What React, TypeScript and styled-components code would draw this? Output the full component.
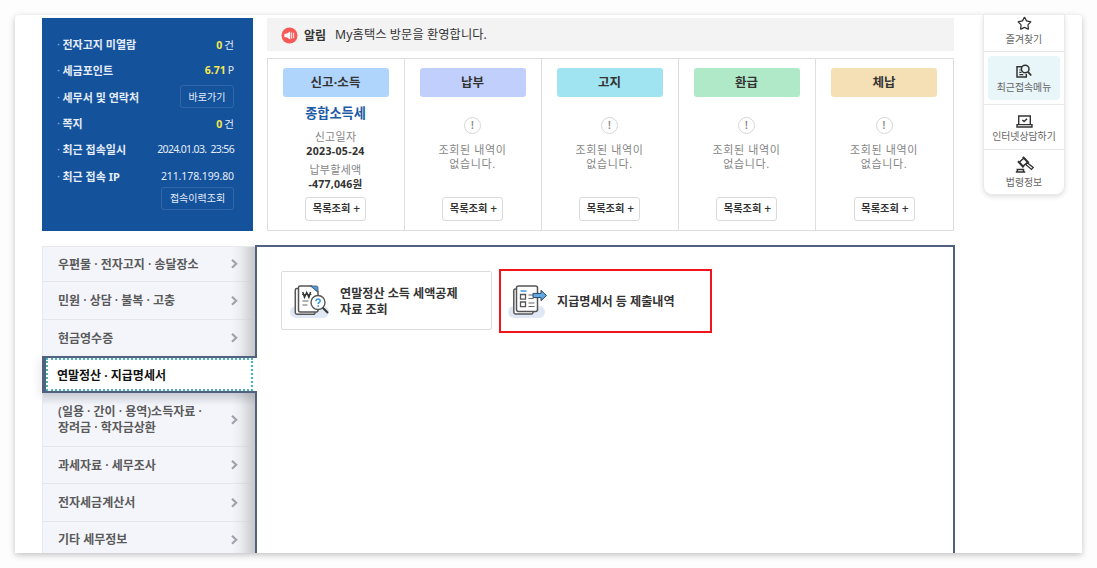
import React from 'react';
import styled, { createGlobalStyle } from 'styled-components';
import { Star } from 'lucide-react';

const Global = createGlobalStyle`
  * { box-sizing: border-box; }
  html, body { margin: 0; }
  body {
    background: #fdfdfd;
    font-family: "Noto Sans", "Noto Sans CJK KR", sans-serif;
    color: #333;
    overflow: hidden;
  }
  button { font-family: inherit; padding: 0; margin: 0; }
`;

const Stage = styled.div`
  width: 1097px;
  height: 568px;
  padding: 15px;
  overflow: hidden;
`;

const Frame = styled.main`
  display: flex;
  width: 1067px;
  height: 538px;
  background: #fff;
  border-radius: 4px 4px 0 0;
  box-shadow: 0 2px 6px rgba(0, 0, 0, 0.24);
`;

const Main = styled.div`
  display: flex;
  flex-direction: column;
  width: 940px;
  height: 538px;
  padding-left: 27px;
  overflow: hidden;
`;

const Top = styled.div`
  display: flex;
  gap: 14px;
  padding-top: 3px;
  height: 216px;
`;

const Profile = styled.section`
  width: 211px;
  height: 213px;
  padding: 13px 19px 0 15px;
  background: #15529c;
  color: #e4edf8;
`;

const InfoRow = styled.div`
  display: flex;
  align-items: center;
  justify-content: space-between;
  height: 26.3px;
  font-size: 11px;
  white-space: pre;
`;

const InfoLabel = styled.span`
  display: flex;
  font-weight: 700;
  &::before {
    content: '·';
    width: 5.5px;
    font-weight: 400;
    opacity: 0.6;
  }
`;

const InfoValue = styled.span<{ $spacing?: number }>`
  font-size: 10.5px;
  letter-spacing: ${(p) => p.$spacing ?? 0}px;
  b { color: #f5e94f; margin-right: 2px; }
`;

const OutlineButton = styled.button<{ $w: number }>`
  width: ${(p) => p.$w}px;
  height: 23px;
  border: 1px solid #3167a8;
  border-radius: 3px;
  background: transparent;
  color: #e4edf8;
  font-size: 10px;
  line-height: 20px;
`;

const ButtonRow = styled.div`
  display: flex;
  justify-content: flex-end;
  margin-top: -2px;
`;

const Summary = styled.div`
  display: flex;
  flex-direction: column;
  gap: 7px;
  width: 687px;
`;

const Notice = styled.div`
  display: flex;
  align-items: center;
  height: 33px;
  padding: 0 15px 0 14px;
  background: #f3f3f3;
  font-size: 12.2px;
  line-height: 18px;
  svg { margin: 2px 6px 0 0; }
  strong { margin: 3px 9px 0 0; font-size: 12px; }
  span { margin-top: 1px; letter-spacing: 0.1px; }
`;

const Cards = styled.div`
  display: grid;
  grid-template-columns: 136px repeat(3, 137px) 1fr;
  height: 174px;
  border: 1px solid #dedede;
`;

const Card = styled.article`
  display: flex;
  flex-direction: column;
  align-items: center;
  padding: 9px 1px 0 0;
  & + & { border-left: 1px solid #dedede; }
`;

const Badge = styled.h3<{ $bg: string }>`
  width: 106px;
  height: 29px;
  margin: 0;
  border-radius: 3px;
  background: ${(p) => p.$bg};
  font-size: 12.5px;
  line-height: 29px;
  letter-spacing: 0.1px;
  text-align: center;
  white-space: nowrap;
`;

const CardBody = styled.div`
  display: flex;
  flex-direction: column;
  align-items: center;
  height: 101px;
`;

const TaxName = styled.strong`
  margin-top: 6px;
  color: #1c5aa6;
  font-size: 13.2px;
  line-height: 20px;
`;

const Caption = styled.span<{ $mt: number }>`
  margin-top: ${(p) => p.$mt}px;
  color: #858585;
  font-size: 11px;
  line-height: 15px;
  letter-spacing: 0.3px;
`;

const Figure = styled.b<{ $spacing: number }>`
  font-size: 10.6px;
  line-height: 14px;
  letter-spacing: ${(p) => p.$spacing}px;
`;

const EmptyMark = styled.span`
  display: flex;
  align-items: center;
  justify-content: center;
  width: 17px;
  height: 17px;
  margin: 20px 0 9px;
  border: 1px solid #d6d6d6;
  border-radius: 50%;
  color: #8a8a8a;
  font-size: 10px;
  line-height: 14px;
  font-weight: 600;
`;

const EmptyText = styled.p`
  margin: 0;
  color: #858585;
  font-size: 11px;
  line-height: 14px;
  letter-spacing: 0.6px;
  text-align: center;
  white-space: pre;
`;

const ListButton = styled.button`
  display: flex;
  align-items: center;
  justify-content: center;
  gap: 3px;
  width: 61px;
  height: 24px;
  margin-top: -1px;
  padding-left: 2px;
  border: 1px solid #dadada;
  border-radius: 3px;
  background: #fff;
  color: #333;
  font-size: 10.2px;
  font-weight: 700;
  line-height: 21px;
  white-space: nowrap;
  span { font-weight: 500; font-size: 12px; line-height: 20px; }
`;

const Bottom = styled.div`
  display: flex;
  margin-top: 14px;
  height: 320px;
`;

const Side = styled.nav`
  position: relative;
  z-index: 1;
  width: 213px;
  margin-top: 1px;
  border: 1px solid #e6e8ec;
  border-width: 1px 0 0 1px;
  background: linear-gradient(to right, #f3f5fa 0, #f3f5fa 189px, #e9ebee 198px, #c6c7c9 212px);
`;

const SideItem = styled.a<{ $h: number; $shade?: boolean }>`
  display: flex;
  align-items: center;
  justify-content: space-between;
  height: ${(p) => p.$h}px;
  padding: 1px 17px 0 15px;
  border-bottom: 1px solid rgba(200, 204, 212, 0.35);
  background: ${(p) => (p.$shade ? 'linear-gradient(rgba(90,95,110,.2), rgba(90,95,110,0) 13px)' : 'none')};
  background-clip: padding-box;
  color: #5a5a5a;
  font-size: 12px;
  font-weight: 600;
  line-height: 16px;
  white-space: pre;
  svg { margin-bottom: 1px; }
`;

const ActiveItem = styled.a`
  display: block;
  width: 215px;
  height: 37px;
  margin: -1px 0 0 -1px;
  border: solid #51617f;
  border-width: 2px 0 2px 4px;
  background: #fff;
  color: #111;
  font-size: 12px;
  font-weight: 700;
  box-shadow: -3px 3px 8px rgba(60, 70, 90, 0.1);
`;

const FocusRing = styled.span`
  display: flex;
  align-items: center;
  width: 207px;
  height: 33px;
  padding: 0 0 0 9px;
  border: 2px dotted #48b5bb;
`;

const Panel = styled.section`
  display: flex;
  align-items: flex-start;
  gap: 7px;
  width: 700px;
  flex: none;
  height: 340px;
  padding: 23px 0 0 24px;
  border: 2px solid #51617f;
  background: #fff;
`;

const LinkCard = styled.a<{ $marked?: boolean }>`
  display: flex;
  align-items: center;
  gap: ${(p) => (p.$marked ? 9 : 10)}px;
  width: ${(p) => (p.$marked ? 213 : 211)}px;
  height: ${(p) => (p.$marked ? 64 : 59)}px;
  margin-top: ${(p) => (p.$marked ? -1 : 1)}px;
  padding: ${(p) => (p.$marked ? 1 : 2)}px 0 0 ${(p) => (p.$marked ? 7 : 8)}px;
  border: ${(p) => (p.$marked ? '2px solid #f0141c' : '1px solid #dcdcdc')};
  border-radius: ${(p) => (p.$marked ? 0 : 2)}px;
  color: #333;
  font-size: 12.1px;
  font-weight: 700;
  line-height: 16px;
  white-space: pre;
`;

const Rail = styled.aside`
  display: flex;
  flex-direction: column;
  width: 82px;
  height: 180px;
  margin-left: 28px;
  border: 1px solid #e8eaec;
  border-top: 0;
  border-radius: 0 0 9px 9px;
  background: #fff;
  box-shadow: 0 2px 5px rgba(0, 0, 0, 0.12);
`;

const RailItem = styled.a<{ $h: number; $on?: boolean }>`
  display: flex;
  flex-direction: column;
  align-items: center;
  height: ${(p) => p.$h}px;
  padding: ${(p) => (p.$on ? '4px' : '0')};
  color: #666;
  font-size: 9.9px;
  line-height: 14px;
  white-space: nowrap;
  & + & { border-top: 1px solid #e4e7e9; }
`;

const RailInner = styled.span<{ $on?: boolean; $pt: number; $gap: number }>`
  display: flex;
  flex-direction: column;
  align-items: center;
  gap: ${(p) => p.$gap}px;
  width: 72px;
  height: ${(p) => (p.$on ? '44px' : 'auto')};
  padding-top: ${(p) => p.$pt}px;
  border-radius: 4px;
  background: ${(p) => (p.$on ? '#e8f5f9' : 'none')};
`;

const Speaker = () => (
  <svg width="17" height="17" viewBox="0 0 17 17">
    <circle cx="8.5" cy="8.5" r="8" fill="#f65a58" />
    <path d="M3.4 6.8h2.2l3.6-2.2v7.8L5.6 10.2H3.4z" fill="#fff" />
    <path d="M10.6 5.4v6.2M12.6 5.8v5.4" stroke="#fff" strokeWidth="1.1" opacity=".85" />
  </svg>
);

const Arrow = () => (
  <svg width="7" height="10" viewBox="0 0 7 10" fill="none">
    <path d="M1 .8 5.2 4.8 1 8.8" stroke="#9fa2ac" strokeWidth="2.2" />
  </svg>
);

const SearchDoc = () => (
  <svg width="16" height="15" viewBox="0 0 16 15" fill="none" stroke="#333" strokeWidth="1.5">
    <path d="M6 2.8H1v10.3h9.3v-3" />
    <path d="M3.3 6h1.5M3.3 8.3h2.2M3.3 10.6h4" strokeWidth="1.2" />
    <circle cx="9.2" cy="5" r="3.8" fill="#e8f5f9" />
    <path d="m12 7.8 3.2 3.7" strokeWidth="1.8" />
  </svg>
);

const Laptop = () => (
  <svg width="17" height="13" viewBox="0 0 17 13" fill="none" stroke="#333" strokeWidth="1.4">
    <path d="M2.7 9.3V1h11.6v8.3M1 9.6h15v2.4H1z" />
    <path d="m6.3 5 1.8 1.6L11 3.8" strokeWidth="1.5" />
  </svg>
);

const Gavel = () => (
  <svg width="19" height="17" viewBox="0 0 19 17" fill="none" stroke="#333" strokeWidth="1.5">
    <path d="m4.2 6.2 4.8-4.2 3.6 4.2-4.8 4.2z" />
    <path d="m7.8.9 5.9 6M3 5.3l5.7 6" strokeWidth="2" />
    <path d="m10.7 8.6 1.8-1.7 5.7 4.5-1.7 2-5.8-4.8" strokeWidth="1.3" />
    <path d="M2.3 15.6v-2h6.2v2M.8 15.9h9.5" />
  </svg>
);

const DocSearchArt = () => (
  <svg width="40" height="34" viewBox="0 0 40 34" fill="none">
    <rect y="21" width="39" height="12" rx="6" fill="#dfe8f4" />
    <path d="M8.5 3.5H6.8A1.5 1.5 0 0 0 5.300 5v22.500A1.800 1.800 0 0 0 7 29.300h16.500a1.500 1.500 0 0 0 1.500-1.500V27" fill="#fff" stroke="#555" strokeWidth="1.5" />
    <path d="M10 1h11.5l6.5 6v18.5a1.5 1.5 0 0 1-1.5 1.5H10a1.5 1.5 0 0 1-1.5-1.5v-23A1.5 1.5 0 0 1 10 1z" fill="#fff" stroke="#555" strokeWidth="1.5" />
    <path d="M20.5 1h6A1.5 1.5 0 0 1 28 2.5V7z" fill="#4f9bdd" stroke="#456" strokeWidth=".8" />
    <path d="m12.8 7 1.700 5.300L16.700 7.500l2.200 4.800L20.600 7" stroke="#333" strokeWidth="1.5" />
    <path d="M12 9.500h9.500" stroke="#333" strokeWidth=".8" />
    <path d="M12.5 16h6M12.5 20h5" stroke="#666" strokeWidth="1.2" />
    <path d="m32.5 22.500 5.500 5.500" stroke="#333" strokeWidth="2" />
    <circle cx="28" cy="17.5" r="7" fill="#fff" stroke="#555" strokeWidth="1.4" />
    <path d="M26 16.200c0-3.100 4.400-2.700 4.200-.2-.1 1.400-2 1.500-2 3M28.200 20.200v1.600" stroke="#3596e0" strokeWidth="1.6" />
  </svg>
);

const DocSendArt = () => (
  <svg width="40" height="34" viewBox="0 0 40 34" fill="none">
    <rect y="21" width="37" height="12" rx="6" fill="#dfe8f4" />
    <path d="M8.500 4H7.300a1.500 1.500 0 0 0-1.500 1.500v21.800A1.800 1.800 0 0 0 7.600 29H23.500a1.500 1.500 0 0 0 1.500-1.500V26.500" fill="#fff" stroke="#555" strokeWidth="1.5" />
    <rect x="8.5" y="1" width="21" height="25.5" rx="2" fill="#fff" stroke="#555" strokeWidth="1.5" />
    <path d="M12.5 6h6" stroke="#459be0" strokeWidth="1.5" />
    <path d="M12.5 9.5h5v4.600h-5zM12.500 17h5v4.600h-5z" stroke="#555" strokeWidth="1.3" />
    <path d="M20.5 10h5M20.500 13.500h5M20.500 18h6M20.500 21.500h6" stroke="#666" strokeWidth="1.2" />
    <path d="M25 8.400h8V5.300l5.500 5.200-5.500 5.200v-3.100h-8z" fill="#5cabe8" stroke="#345" strokeWidth="1" />
  </svg>
);

const statuses = [
  { title: '납부', bg: '#c0cffb' },
  { title: '고지', bg: '#a0e4f1' },
  { title: '환급', bg: '#afe9c7' },
  { title: '체납', bg: '#f5e0b5' },
];

const MoreButton = () => (
  <ListButton>목록조회<span>+</span></ListButton>
);

export default function App() {
  return (
    <Stage>
      <Global />
      <Frame>
        <Main>
          <Top>
            <Profile>
              <InfoRow><InfoLabel>전자고지 미열람</InfoLabel><InfoValue><b>0</b>건</InfoValue></InfoRow>
              <InfoRow><InfoLabel>세금포인트</InfoLabel><InfoValue><b>6.71</b>P</InfoValue></InfoRow>
              <InfoRow><InfoLabel>세무서 및 연락처</InfoLabel><OutlineButton $w={54}>바로가기</OutlineButton></InfoRow>
              <InfoRow><InfoLabel>쪽지</InfoLabel><InfoValue><b>0</b>건</InfoValue></InfoRow>
              <InfoRow><InfoLabel>최근 접속일시</InfoLabel><InfoValue $spacing={-0.67}>2024.01.03.  23:56</InfoValue></InfoRow>
              <InfoRow><InfoLabel>최근 접속 IP</InfoLabel><InfoValue $spacing={-0.1}>211.178.199.80</InfoValue></InfoRow>
              <ButtonRow><OutlineButton $w={73}>접속이력조회</OutlineButton></ButtonRow>
            </Profile>
            <Summary>
              <Notice>
                <Speaker />
                <strong>알림</strong>
                <span>My홈택스 방문을 환영합니다.</span>
              </Notice>
              <Cards>
                <Card>
                  <Badge $bg="#b0d5fc">신고·소득</Badge>
                  <CardBody>
                    <TaxName>종합소득세</TaxName>
                    <Caption $mt={6}>신고일자</Caption>
                    <Figure $spacing={0.3}>2023-05-24</Figure>
                    <Caption $mt={4}>납부할세액</Caption>
                    <Figure $spacing={0.15}>-477,046원</Figure>
                  </CardBody>
                  <MoreButton />
                </Card>
                {statuses.map((s) => (
                  <Card key={s.title}>
                    <Badge $bg={s.bg}>{s.title}</Badge>
                    <CardBody>
                      <EmptyMark>!</EmptyMark>
                      <EmptyText>{'조회된 내역이\n없습니다.'}</EmptyText>
                    </CardBody>
                    <MoreButton />
                  </Card>
                ))}
              </Cards>
            </Summary>
          </Top>
          <Bottom>
            <Side>
              <SideItem $h={35}>우편물 · 전자고지 · 송달장소<Arrow /></SideItem>
              <SideItem $h={38}>민원 · 상담 · 불복 · 고충<Arrow /></SideItem>
              <SideItem $h={37}>현금영수증<Arrow /></SideItem>
              <ActiveItem><FocusRing>연말정산 · 지급명세서</FocusRing></ActiveItem>
              <SideItem $h={54} $shade>{'(일용 · 간이 · 용역)소득자료 ·\n장려금 · 학자금상환'}<Arrow /></SideItem>
              <SideItem $h={37}>과세자료 · 세무조사<Arrow /></SideItem>
              <SideItem $h={38}>전자세금계산서<Arrow /></SideItem>
              <SideItem $h={36}>기타 세무정보<Arrow /></SideItem>
            </Side>
            <Panel>
              <LinkCard><DocSearchArt />{'연말정산 소득 세액공제\n자료 조회'}</LinkCard>
              <LinkCard $marked><DocSendArt />지급명세서 등 제출내역</LinkCard>
            </Panel>
          </Bottom>
        </Main>
        <Rail>
          <RailItem $h={36}>
            <RailInner $pt={1} $gap={1}><Star size={15} color="#333" strokeWidth={2} />즐겨찾기</RailInner>
          </RailItem>
          <RailItem $h={53} $on>
            <RailInner $on $pt={8} $gap={1}><SearchDoc />최근접속메뉴</RailInner>
          </RailItem>
          <RailItem $h={45}>
            <RailInner $pt={10} $gap={1}><Laptop />인터넷상담하기</RailInner>
          </RailItem>
          <RailItem $h={45}>
            <RailInner $pt={6} $gap={2}><Gavel />법령정보</RailInner>
          </RailItem>
        </Rail>
      </Frame>
    </Stage>
  );
}
